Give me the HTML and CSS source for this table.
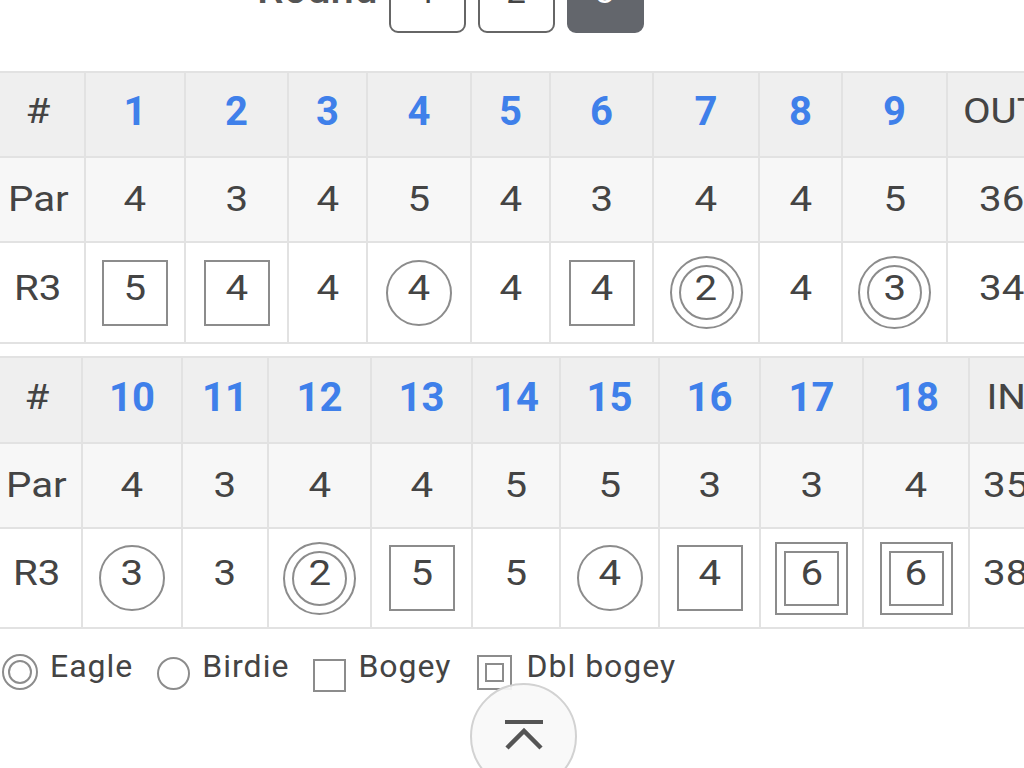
FILE: index.html
```html
<!DOCTYPE html>
<html lang="en">
<head>
<meta charset="utf-8">
<title>Scorecard – Round 3</title>
<link rel="stylesheet" href="styles.css">
</head>
<body>
<div class="round-bar">
  <span class="round-label">Round</span>
  <button class="round-btn">1</button>
  <button class="round-btn">2</button>
  <button class="round-btn active">3</button>
</div>

<div class="card front">
  <div class="cell head"><span class="t">#</span></div>
  <div class="cell head hole">1</div>
  <div class="cell head hole">2</div>
  <div class="cell head hole">3</div>
  <div class="cell head hole">4</div>
  <div class="cell head hole">5</div>
  <div class="cell head hole">6</div>
  <div class="cell head hole">7</div>
  <div class="cell head hole">8</div>
  <div class="cell head hole">9</div>
  <div class="cell head"><span class="t">OUT</span></div>

  <div class="cell par"><span class="t">Par</span></div>
  <div class="cell par"><span class="t">4</span></div>
  <div class="cell par"><span class="t">3</span></div>
  <div class="cell par"><span class="t">4</span></div>
  <div class="cell par"><span class="t">5</span></div>
  <div class="cell par"><span class="t">4</span></div>
  <div class="cell par"><span class="t">3</span></div>
  <div class="cell par"><span class="t">4</span></div>
  <div class="cell par"><span class="t">4</span></div>
  <div class="cell par"><span class="t">5</span></div>
  <div class="cell par"><span class="t">36</span></div>

  <div class="cell score"><span class="t">R3</span></div>
  <div class="cell score"><span class="mark sq"><span class="t">5</span></span></div>
  <div class="cell score"><span class="mark sq"><span class="t">4</span></span></div>
  <div class="cell score"><span class="t">4</span></div>
  <div class="cell score"><span class="mark ci"><span class="t">4</span></span></div>
  <div class="cell score"><span class="t">4</span></div>
  <div class="cell score"><span class="mark sq"><span class="t">4</span></span></div>
  <div class="cell score"><span class="mark ci dbl"><span class="mark ci inner"><span class="t">2</span></span></span></div>
  <div class="cell score"><span class="t">4</span></div>
  <div class="cell score"><span class="mark ci dbl"><span class="mark ci inner"><span class="t">3</span></span></span></div>
  <div class="cell score"><span class="t">34</span></div>
</div>

<div class="card back">
  <div class="cell head"><span class="t">#</span></div>
  <div class="cell head hole">10</div>
  <div class="cell head hole">11</div>
  <div class="cell head hole">12</div>
  <div class="cell head hole">13</div>
  <div class="cell head hole">14</div>
  <div class="cell head hole">15</div>
  <div class="cell head hole">16</div>
  <div class="cell head hole">17</div>
  <div class="cell head hole">18</div>
  <div class="cell head"><span class="t">IN</span></div>

  <div class="cell par"><span class="t">Par</span></div>
  <div class="cell par"><span class="t">4</span></div>
  <div class="cell par"><span class="t">3</span></div>
  <div class="cell par"><span class="t">4</span></div>
  <div class="cell par"><span class="t">4</span></div>
  <div class="cell par"><span class="t">5</span></div>
  <div class="cell par"><span class="t">5</span></div>
  <div class="cell par"><span class="t">3</span></div>
  <div class="cell par"><span class="t">3</span></div>
  <div class="cell par"><span class="t">4</span></div>
  <div class="cell par"><span class="t">35</span></div>

  <div class="cell score"><span class="t">R3</span></div>
  <div class="cell score"><span class="mark ci"><span class="t">3</span></span></div>
  <div class="cell score"><span class="t">3</span></div>
  <div class="cell score"><span class="mark ci dbl"><span class="mark ci inner"><span class="t">2</span></span></span></div>
  <div class="cell score"><span class="mark sq"><span class="t">5</span></span></div>
  <div class="cell score"><span class="t">5</span></div>
  <div class="cell score"><span class="mark ci"><span class="t">4</span></span></div>
  <div class="cell score"><span class="mark sq"><span class="t">4</span></span></div>
  <div class="cell score"><span class="mark sq dbl"><span class="mark sq inner"><span class="t">6</span></span></span></div>
  <div class="cell score"><span class="mark sq dbl"><span class="mark sq inner"><span class="t">6</span></span></span></div>
  <div class="cell score"><span class="t">38</span></div>
</div>

<div class="legend">
  <div class="legend-item">
    <span class="icon round eagle"><span class="icon round eagle-in"></span></span>
    <span>Eagle</span>
  </div>
  <div class="legend-item">
    <span class="icon round birdie"></span>
    <span>Birdie</span>
  </div>
  <div class="legend-item">
    <span class="icon bogey"></span>
    <span>Bogey</span>
  </div>
  <div class="legend-item">
    <span class="icon dbogey"><span class="icon dbogey-in"></span></span>
    <span>Dbl bogey</span>
  </div>
</div>

<button class="to-top" aria-label="Back to top">
  <svg width="38" height="30" viewBox="0 0 38 30">
    <rect x="0" y="0" width="38" height="4" fill="#555"/>
    <polyline points="2,28 19,11 36,28" fill="none" stroke="#555" stroke-width="4.5"/>
  </svg>
</button>
</body>
</html>
```

FILE: styles.css
```css
* {
  box-sizing: border-box;
}

html {
  overflow: hidden;
}

body {
  margin: 0;
  width: 1024px;
  height: 768px;
  overflow: hidden;
  position: relative;
  background: #ffffff;
  color: #444444;
  font-family: Roboto, "Noto Sans", "Liberation Sans", sans-serif;
}

/* Round selector */
.round-bar {
  display: flex;
  align-items: baseline;
  gap: 12px;
  margin-top: -49px;
  padding-left: 257px;
}

.round-label {
  font-size: 42px;
  font-weight: 500;
  color: #555555;
  margin-right: -1px;
}

.round-btn {
  width: 77px;
  height: 82px;
  padding: 0;
  border: 2px solid #666666;
  border-radius: 9px;
  background: #ffffff;
  color: #444444;
  font-family: Roboto, "Noto Sans", sans-serif;
  font-size: 35px;
  line-height: 78px;
  text-align: center;
}

.round-btn.active {
  background: #63666c;
  border-color: #63666c;
  color: #ffffff;
}

/* Score cards */
.card {
  display: grid;
  gap: 2px;
  padding: 2px;
  background: #e2e2e2;
  margin-left: -10px;
  width: max-content;
}

.card.front {
  margin-top: 38px;
  grid-template-columns: 92px 98px 101px 77px 102px 77px 101px 104px 81px 103px 108px;
  grid-template-rows: 83px 83px 99px;
}

.card.back {
  margin-top: 12px;
  grid-template-columns: 89px 98px 84px 101px 99px 86px 97px 99px 101px 104px 72px;
  grid-template-rows: 84px 83px 98px;
}

.cell {
  display: flex;
  align-items: center;
  justify-content: center;
  font-size: 35px;
  white-space: nowrap;
}

/* regular-weight figures are drawn a little wide in this card */
.t {
  display: inline-block;
  transform: scaleX(1.15);
}

.cell.head {
  background: #efefef;
  padding-bottom: 6px;
}

.cell.par {
  background: #f7f7f7;
}

.cell.score {
  background: #ffffff;
}

.cell.score > .t,
.mark > .t {
  margin-bottom: 9px;
}

.cell.hole {
  color: #3f80ea;
  font-weight: 700;
  font-size: 40px;
}

/* Score marks */
.mark {
  display: flex;
  align-items: center;
  justify-content: center;
  border: 2px solid #8c8c8c;
  width: 66px;
  height: 66px;
}

.mark.ci {
  border-radius: 50%;
}

.mark.dbl {
  width: 73px;
  height: 73px;
  padding: 7px;
}

.mark.inner {
  width: 55px;
  height: 55px;
}

/* Legend */
.legend {
  display: flex;
  align-items: flex-end;
  gap: 24px;
  margin-top: 18px;
  padding-left: 2px;
  font-size: 32px;
  line-height: 38px;
  letter-spacing: 1px;
}

.legend-item {
  display: flex;
  align-items: flex-end;
  gap: 12px;
}

.icon {
  display: block;
  border: 2px solid #8c8c8c;
}

.legend-item > .icon {
  margin-bottom: -5px;
}

.icon.round {
  border-radius: 50%;
}

.icon.eagle {
  width: 36px;
  height: 36px;
  padding: 4px;
}

.icon.eagle-in {
  width: 24px;
  height: 24px;
}

.icon.birdie {
  width: 33px;
  height: 33px;
}

.legend-item > .icon.bogey {
  width: 33px;
  height: 33px;
  margin-bottom: -7px;
}

.legend-item:last-child {
  margin-left: 2px;
  gap: 14px;
}

.icon.dbogey {
  width: 35px;
  height: 35px;
  padding: 6px;
}

.icon.dbogey-in {
  width: 19px;
  height: 19px;
}

/* Floating back-to-top button */
.to-top {
  position: absolute;
  left: 470px;
  top: 683px;
  width: 107px;
  height: 107px;
  padding: 35px 0 0;
  border: 2px solid #d2d2d2;
  border-radius: 50%;
  background: rgba(249, 249, 249, 0.92);
  display: flex;
  justify-content: center;
  align-items: flex-start;
}

.to-top svg {
  display: block;
}
```
